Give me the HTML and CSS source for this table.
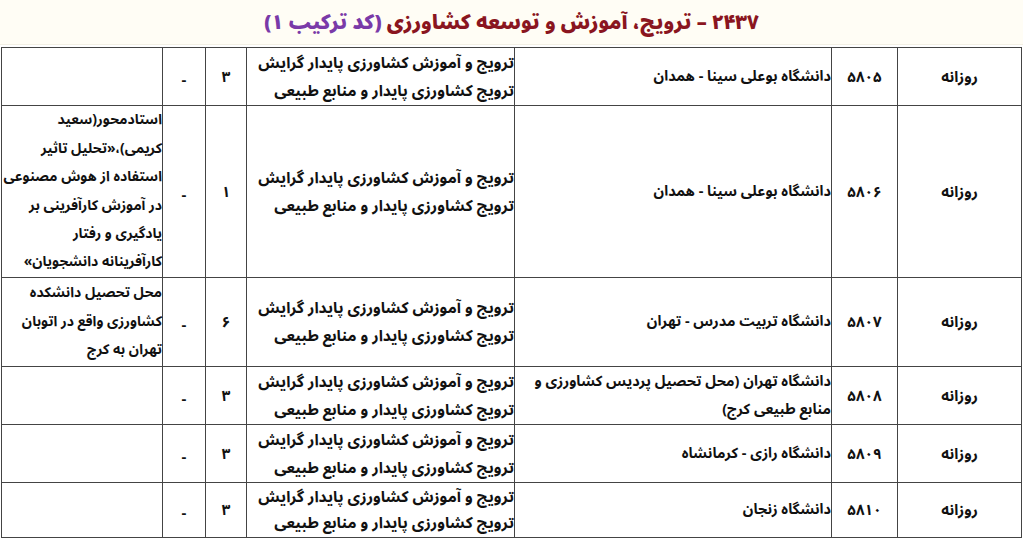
FILE: index.html
```html
<!DOCTYPE html>
<html lang="fa" dir="rtl">
<head>
<meta charset="utf-8">
<title>۲۴۳۷ – ترویج، آموزش و توسعه کشاورزی</title>
<link rel="stylesheet" href="styles.css">
</head>
<body>
<div class="page">
  <header class="title-band">
    <h1 class="title"><span class="title-main">۲۴۳۷ – ترویج، آموزش و توسعه کشاورزی</span> <span class="title-code">(کد ترکیب ۱)</span></h1>
  </header>
  <table class="grid">
    <colgroup>
      <col class="c-type">
      <col class="c-code">
      <col class="c-uni">
      <col class="c-field">
      <col class="c-cap">
      <col class="c-dash">
      <col class="c-note">
    </colgroup>
    <tbody>
      <tr class="r2">
        <td class="center">روزانه</td>
        <td class="center num">۵۸۰۵</td>
        <td class="txt uni">دانشگاه بوعلی سینا - همدان</td>
        <td class="txt field">ترویج و آموزش کشاورزی پایدار گرایش<br>ترویج کشاورزی پایدار و منابع طبیعی</td>
        <td class="center">۳</td>
        <td class="center dash">-</td>
        <td class="txt"></td>
      </tr>
      <tr class="r6">
        <td class="center">روزانه</td>
        <td class="center num">۵۸۰۶</td>
        <td class="txt uni">دانشگاه بوعلی سینا - همدان</td>
        <td class="txt field">ترویج و آموزش کشاورزی پایدار گرایش<br>ترویج کشاورزی پایدار و منابع طبیعی</td>
        <td class="center">۱</td>
        <td class="center dash">-</td>
        <td class="txt note">استادمحور(سعید<br>کریمی)،«تحلیل تاثیر<br>استفاده از هوش مصنوعی<br>در آموزش کارآفرینی بر<br>یادگیری و رفتار<br>کارآفرینانه دانشجویان»</td>
      </tr>
      <tr class="r3">
        <td class="center">روزانه</td>
        <td class="center num">۵۸۰۷</td>
        <td class="txt uni">دانشگاه تربیت مدرس - تهران</td>
        <td class="txt field">ترویج و آموزش کشاورزی پایدار گرایش<br>ترویج کشاورزی پایدار و منابع طبیعی</td>
        <td class="center">۶</td>
        <td class="center dash">-</td>
        <td class="txt note">محل تحصیل دانشکده<br>کشاورزی واقع در اتوبان<br>تهران به کرج</td>
      </tr>
      <tr class="r2">
        <td class="center">روزانه</td>
        <td class="center num">۵۸۰۸</td>
        <td class="txt uni">دانشگاه تهران (محل تحصیل پردیس کشاورزی و<br>منابع طبیعی کرج)</td>
        <td class="txt field">ترویج و آموزش کشاورزی پایدار گرایش<br>ترویج کشاورزی پایدار و منابع طبیعی</td>
        <td class="center">۳</td>
        <td class="center dash">-</td>
        <td class="txt"></td>
      </tr>
      <tr class="r2">
        <td class="center">روزانه</td>
        <td class="center num">۵۸۰۹</td>
        <td class="txt uni">دانشگاه رازی - کرمانشاه</td>
        <td class="txt field">ترویج و آموزش کشاورزی پایدار گرایش<br>ترویج کشاورزی پایدار و منابع طبیعی</td>
        <td class="center">۳</td>
        <td class="center dash">-</td>
        <td class="txt"></td>
      </tr>
      <tr class="r1 last">
        <td class="center">روزانه</td>
        <td class="center num">۵۸۱۰</td>
        <td class="txt uni">دانشگاه زنجان</td>
        <td class="txt field">ترویج و آموزش کشاورزی پایدار گرایش<br>ترویج کشاورزی پایدار و منابع طبیعی</td>
        <td class="center">۳</td>
        <td class="center dash">-</td>
        <td class="txt"></td>
      </tr>
    </tbody>
  </table>
</div>
</body>
</html>
```

FILE: styles.css
```css
html, body {
  margin: 0;
  padding: 0;
  background: #ffffff;
}

.page {
  width: 1023px;
  direction: rtl;
  font-family: "Noto Sans Arabic", "Noto Naskh Arabic", "DejaVu Sans", sans-serif;
  color: #111111;
}

.title-band {
  background: #fffdf5;
  height: 44px;
  display: flex;
  align-items: center;
  justify-content: center;
  border-bottom: 1px solid #f3f0e4;
  margin-bottom: 2px;
}

.title {
  margin: 0;
  font-size: 20px;
  font-weight: 900;
  line-height: 1;
  padding-top: 2px;
}

.title-main {
  color: #8a1520;
}

.title-code {
  color: #7a3aa8;
}

.grid {
  margin-right: 1px;
  width: 1021px;
  table-layout: fixed;
  border-collapse: collapse;
  font-size: 15px;
  font-weight: bold;
}

.c-type { width: 124px; }
.c-code { width: 66px; }
.c-uni { width: 317px; }
.c-field { width: 268px; }
.c-cap { width: 41px; }
.c-dash { width: 43px; }
.c-note { width: 161px; }

.grid td {
  border: 1px solid #444444;
  padding: 0 0 0 2px;
  line-height: 28px;
  vertical-align: middle;
  white-space: nowrap;
}

.grid td.center {
  text-align: center;
  padding: 0;
}

.grid td.dash {
  padding-top: 6px;
}

.grid td.txt {
  text-align: right;
}

.grid td.uni {
  font-size: 14.5px;
}

.grid td.field {
  font-size: 15.5px;
}

.grid td.note {
  font-size: 14px;
  line-height: 28.4px;
}

.grid td.num {
  font-size: 15px;
}

.r2 { height: 58px; }
.r6 { height: 172px; }
.r3 { height: 89px; }
.r1 { height: 55px; }
.grid .last td { line-height: 26.5px; }
```
